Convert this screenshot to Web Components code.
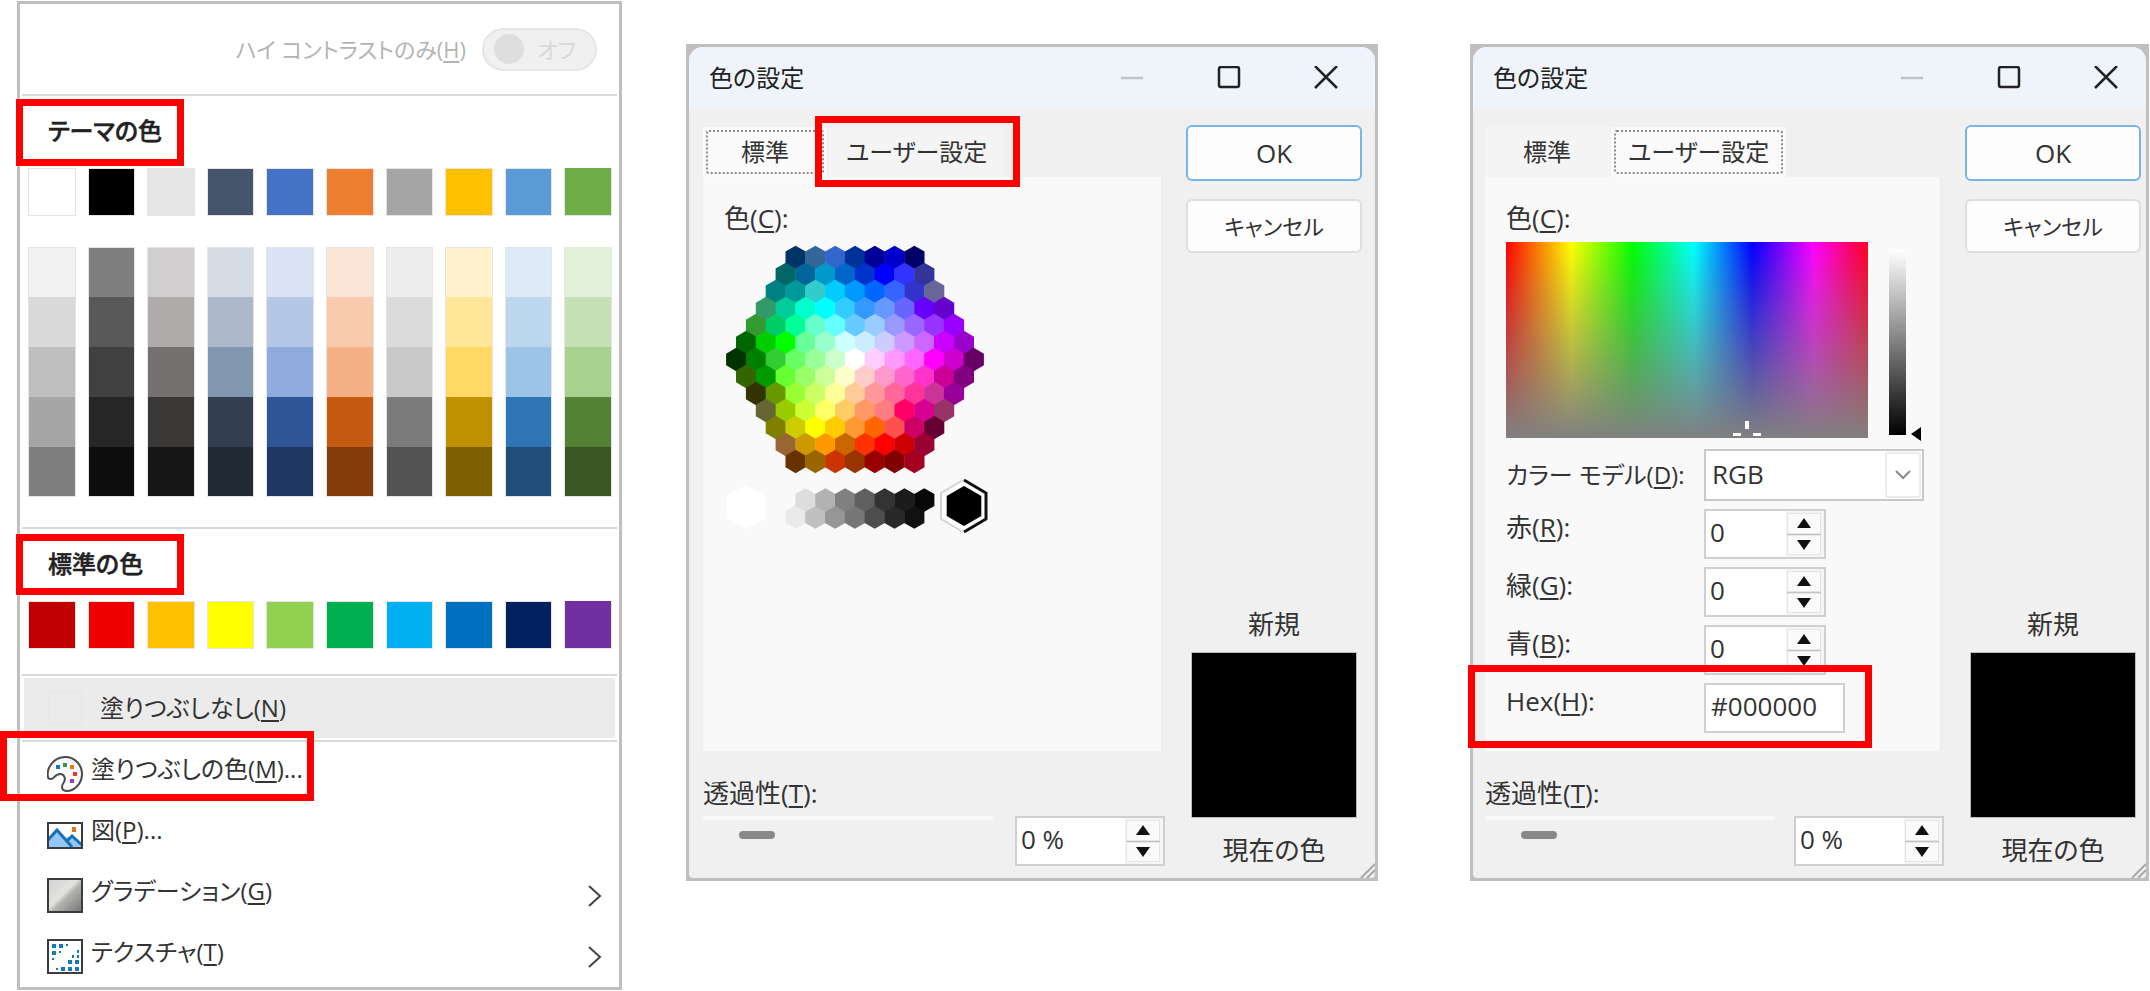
<!DOCTYPE html>
<html lang="ja">
<head>
<meta charset="utf-8">
<title>色の設定</title>
<style>
  body { margin: 0; background: #fff; color: #333; font: 26px/32px "Open Sans", "Noto Sans CJK JP", sans-serif; font-feature-settings: "palt"; }
  main { display: grid; grid-template-columns: minmax(0, 605fr) 64px minmax(0, 692fr) 92px minmax(0, 679fr); align-items: start; padding: 1px 1px 0 17px; }
  fill-menu { grid-column: 1; }
  color-dialog { margin-top: 43px; }
  color-dialog.standard { grid-column: 3; }
  color-dialog.custom { grid-column: 5; --body-left: 12px; --body-right: 5px; --caption-right: 28px; }
</style>
</head>
<body>
<main>
  <fill-menu></fill-menu>
  <color-dialog class="standard" selected="0" marked="1"><standard-colors></standard-colors></color-dialog>
  <color-dialog class="custom" selected="1"><custom-colors></custom-colors></color-dialog>
</main>
<script>
class Base extends HTMLElement {
  constructor() {
    super();
    this.attachShadow({ mode: 'open' }).innerHTML = '<style>*{box-sizing:border-box}button,input,select{font:inherit;font-feature-settings:inherit;color:inherit;margin:0}u{text-underline-offset:3px;text-decoration-thickness:2px}</style>' + this.markup();
  }
}

/* Red frame drawn over and around whatever is slotted in. */
class CalloutFrame extends Base {
  markup() {
    return `<style>
      :host { display: block; position: relative; }
      .frame { position: absolute; z-index: 2; top: var(--t, 0px); left: var(--l, 0px); right: var(--r, 0px); bottom: var(--b, 0px); width: var(--w, auto); border: 7px solid #f00; pointer-events: none; }
    </style><slot></slot><div class="frame"></div>`;
  }
}
customElements.define('callout-frame', CalloutFrame);

/* A row (or stacked block) of ten colour columns. */
class SwatchGrid extends HTMLElement {
  connectedCallback() {
    const rows = this.getAttribute('colors').trim().split('|').map(r => r.trim().split(/\s+/));
    const cells = rows.map(r => r.map(c => `<button aria-label="#${c}" style="background:#${c}"></button>`).join('')).join('');
    this.attachShadow({ mode: 'open' }).innerHTML = `<style>
      :host { display: grid; grid-template-columns: repeat(10, minmax(0, 1fr)); column-gap: 12px; padding: 0 7px 0 8px; }
      button { height: var(--cell, 48px); padding: 0; border: 0 solid #e4e4e4; border-width: 0 1px; }
      button:nth-child(-n+10) { border-top-width: 1px; }
      button:nth-last-child(-n+10) { border-bottom-width: 1px; }
    </style>${cells}`;
  }
}
customElements.define('swatch-grid', SwatchGrid);

class MenuItem extends Base {
  markup() {
    return `<style>
      :host { display: block; }
      button { display: flex; align-items: center; width: 100%; height: 61px; padding: 2px 17px 0 27px; border: 0; background: none; text-align: left; white-space: nowrap; }
      .icon { flex: none; width: 36px; height: 36px; margin-right: 8px; }
      .text { flex: 1; align-self: flex-start; line-height: 50px; }
      .arrow { display: none; width: 14px; height: 22px; }
      :host([submenu]) .arrow { display: block; }
    </style>
    <button><span class="icon"><slot name="icon"></slot></span><span class="text"><slot></slot></span>
    <svg class="arrow" viewBox="0 0 14 22" fill="none" stroke="#444" stroke-width="2"><path d="M1 1 12 11 1 21"/></svg></button>`;
  }
}
customElements.define('menu-item', MenuItem);

class FillMenu extends Base {
  markup() {
    return `<style>
      :host { display: block; border: 3px solid #bfbfbf; background: #fff; --cell: 48px; padding-bottom: 1px; font-size: 24px; }
      hr { height: 2px; margin: 0 2px; border: 0; background: #d9d9d9; }
      .contrast { display: flex; align-items: center; justify-content: flex-end; gap: 16px; height: 90px; padding-right: 22px; font-size: 22px; color: #b4b4b4; }
      .switch { display: flex; align-items: center; width: 115px; height: 43px; padding: 0 19px 0 10px; border: 2px solid #e6e6e6; border-radius: 22px; background: #f0f0f0; color: #d8d8d8; justify-content: space-between; }
      .switch input { appearance: none; width: 30px; height: 30px; border-radius: 50%; background: #dedede; }
      h2 { height: 72px; margin: 0; padding-left: 28px; font-size: 24px; font-weight: 500; line-height: 70px; color: #222; -webkit-text-stroke: 0.5px #222; }
      .base { margin-bottom: 31px; }
      .tints { margin-bottom: 30px; --cell: 50px; }
      .basic { margin-bottom: 25px; }
      .none { display: flex; align-items: center; gap: 18px; width: calc(100% - 8px); height: 60px; margin: 2px 4px; padding: 0 24px; border: 0; background: #ebebeb; white-space: nowrap; }
      .none i { width: 34px; height: 34px; border: 1px solid #e6e6e6; }
      svg { display: block; width: 36px; height: 36px; }
    </style>
    <div class="contrast"><label for="hc">ハイ コントラストのみ(<u>H</u>)</label><span class="switch"><input type="checkbox" id="hc" disabled><span>オフ</span></span></div>
    <hr>
    <callout-frame style="--t:3px;--b:2px;--l:-4px;--r:auto;--w:168px"><h2>テーマの色</h2></callout-frame>
    <swatch-grid class="base" colors="ffffff 000000 e7e6e6 44546a 4472c4 ed7d31 a5a5a5 ffc000 5b9bd5 70ad47"></swatch-grid>
    <swatch-grid class="tints" colors="f2f2f2 7f7f7f d0cece d6dce5 dae3f3 fbe5d6 ededed fff2cc deebf7 e2f0d9|
      d9d9d9 595959 afabab adb9ca b4c7e7 f8cbad dbdbdb ffe699 bdd7ee c5e0b4|
      bfbfbf 404040 767171 8497b0 8faadc f4b183 c9c9c9 ffd966 9dc3e6 a9d18e|
      a6a6a6 262626 3b3838 333f50 2f5597 c55a11 7b7b7b bf9000 2e75b6 548235|
      7f7f7f 0d0d0d 171717 222a35 203864 843c0c 525252 7f6000 1f4e79 385723"></swatch-grid>
    <hr>
    <callout-frame style="--t:5px;--b:6px;--l:-4px;--r:auto;--w:168px"><h2>標準の色</h2></callout-frame>
    <swatch-grid class="basic" colors="c00000 ee0000 ffc000 ffff00 92d050 00b050 00b0f0 0070c0 002060 7030a0"></swatch-grid>
    <hr>
    <button class="none"><i></i><span>塗りつぶしなし(<u>N</u>)</span></button>
    <hr>
    <callout-frame style="--t:-11px;--b:2px;--l:-20px;--r:auto;--w:314px"><menu-item><svg slot="icon" viewBox="0 0 36 36"><path d="M1 21C-1 12 7 1 18 1c11 0 17 9 17 17 0 10-8 17-15 17-6 0-6-5-3-9 2-4 0-8-4-8-5 0-7 6-9 5-2 0-3-1-3-2z" fill="#fafafa" stroke="#4a4a4a" stroke-width="2"/><path d="M9 9h4v4H9z" fill="#0b78c8"/><path d="M16 7h4v4h-4z" fill="#2f9a48"/><path d="M23 9h4v4h-4z" fill="#e87a1a"/><path d="M26 16h4v4h-4z" fill="#e8342c"/><path d="M23 23h4v4h-4z" fill="#9b3fc0"/></svg>塗りつぶしの色(<u>M</u>)...</menu-item></callout-frame>
    <menu-item><svg slot="icon" viewBox="0 0 36 36"><rect x="1" y="6" width="34" height="25" fill="#fff"/><path d="M1 24 10 13l8 8 7-2 10 9v3H1z" fill="#8fc8f8"/><path d="M1 23 10 13l15 17M20 24l5-5 10 9" fill="none" stroke="#1c6fb5" stroke-width="3"/><rect x="25" y="10" width="4" height="5" fill="#e8701a"/><rect x="1" y="6" width="34" height="25" fill="none" stroke="#3c3c3c" stroke-width="2"/></svg>図(<u>P</u>)...</menu-item>
    <menu-item submenu><svg slot="icon" viewBox="0 0 36 36"><defs><linearGradient id="g" x1="0" y1="0" x2="1" y2="1"><stop offset="0" stop-color="#d4d4d4"/><stop offset=".45" stop-color="#e2e2e0"/><stop offset=".55" stop-color="#b4b4b2"/><stop offset="1" stop-color="#747474"/></linearGradient></defs><rect x="1" y="1" width="34" height="33" fill="url(#g)" stroke="#3c3c3c" stroke-width="2"/></svg>グラデーション(<u>G</u>)</menu-item>
    <menu-item submenu><svg slot="icon" viewBox="0 0 36 36"><rect x="1" y="1" width="34" height="33" fill="#fff" stroke="#3c3c3c" stroke-width="2"/><path fill="#1478c0" d="M5 5h4v4H5zM12 5h4v4h-4zM19 5h2v2h-2zM5 12h4v4H5zM12 12h2v2h-2zM5 19h2v2H5zM30 11h2v3h-2zM25 16h2v3h-2zM30 16h2v3h-2zM21 21h4v4h-4zM28 21h4v4h-4zM9 29h2v2H9zM14 28h4v4h-4zM21 28h4v4h-4zM28 28h4v4h-4z"/></svg>テクスチャ(<u>T</u>)</menu-item>`;
  }
}
customElements.define('fill-menu', FillMenu);

/* Number field frame with up/down buttons; the text box is slotted in. */
class SpinBox extends Base {
  markup() {
    return `<style>
      :host { display: flex; width: var(--spin-width, 122px); height: 50px; padding: 2px 3px 2px 0; border: 2px solid #cfcfd1; background: linear-gradient(to left, #f5f5f5 38px, #fff 38px); }
      ::slotted(input) { box-sizing: border-box; flex: 1; min-width: 0; padding: 0 0 4px 4px; border: 0; background: none; font: inherit; color: inherit; outline: 0; }
      .keys { display: grid; grid-template-rows: 1fr 1fr; gap: 1px; width: 34px; background: #c4c4c6; }
      button { display: grid; place-items: center; padding: 0; border: 1px solid #e4e4e4; background: #fafafa; }
    </style>
    <slot></slot><span class="keys"><button aria-label="増やす"><svg width="14" height="10" viewBox="0 0 14 10"><path d="M7 0 14 10H0z" fill="#111"/></svg></button><button aria-label="減らす"><svg width="14" height="10" viewBox="0 0 14 10"><path d="M0 0h14L7 10z" fill="#111"/></svg></button></span>`;
  }
}
customElements.define('spin-box', SpinBox);

class ColorDialog extends HTMLElement {
  connectedCallback() {
    const tabs = ['標準', 'ユーザー設定'].map((name, i) => {
      const tab = `<button class="tab t${i}" role="tab" aria-selected="${this.getAttribute('selected') == i}"><span>${name}</span></button>`;
      return this.getAttribute('marked') == i ? `<callout-frame style="--t:-11px;--b:-10px;--l:-14px;--r:-16px">${tab}</callout-frame>` : tab;
    }).join('');
    this.attachShadow({ mode: 'open' }).innerHTML = `<style>
      * { box-sizing: border-box; }
      :host { display: block; box-sizing: border-box; border: 3px solid #bfbfbf; background: #bfbfbf; }
      button, input { font: inherit; font-feature-settings: inherit; color: inherit; margin: 0; }
      u { text-underline-offset: 3px; text-decoration-thickness: 2px; }
      .window { position: relative; border-radius: 14px 14px 4px 4px; background: #f0f0f0; }
      header { display: flex; align-items: center; height: 62px; padding: 0 var(--caption-right, 37px) 0 20px; border-radius: 14px 14px 0 0; background: #eef4fa; color: #222; }
      h1 { flex: 1; margin: 0; font-size: 24px; font-weight: 400; }
      .caption { display: flex; gap: 73px; }
      .caption button { width: 24px; height: 24px; padding: 0; border: 0; background: none; }
      .caption svg { display: block; fill: none; stroke: #222; stroke-width: 2.5; }
      .body { display: grid; grid-template-columns: minmax(0, 1fr) 176px; gap: 21px; padding: 16px var(--body-right, 13px) 12px var(--body-left, 14px); }
      .tabs { display: flex; gap: 2px; height: 50px; margin-top: 2px; font-size: 24px; }
      .tab { height: 50px; padding: 3px; border: 0; background: #f4f4f4; white-space: nowrap; }
      .tab span { display: grid; place-items: center; height: 100%; padding: 0 33px; border: 2px dotted transparent; border-radius: 3px; }
      .tab.t1 span { padding: 0 12px; }
      .tab[aria-selected=true] { background: #fafafa; }
      .tab[aria-selected=true] span { border-color: #8c8c8c; }
      .panel { min-height: 574px; margin-right: 3px; padding: 25px 16px 18px 21px; border-right: 1px solid #ececec; background: #f9f9f9; }
      .alpha-label { display: block; margin: 26px 0 7px; }
      .alpha { display: flex; justify-content: space-between; --spin-width: 150px; }
      .alpha input[type=range] { appearance: none; flex: 0 1 290px; min-width: 0; height: 38px; padding: 0 36px; background: linear-gradient(#f9f9f9 4px, transparent 4px); }
      input[type=range]::-webkit-slider-thumb { appearance: none; width: 36px; height: 8px; border-radius: 4px; background: #888; }
      .side { display: flex; flex-direction: column; text-align: center; }
      .push { height: 54px; padding: 0; border: 2px solid #dedede; border-radius: 6px; background: #fdfdfd; font-size: 22px; }
      .ok { height: 56px; margin-bottom: 18px; border-color: #78b5e6; font-size: 26px; }
      .new { margin-top: auto; }
      .swatch { height: 166px; margin: 12px 5px 16px; background: #000; border: 1px solid #bbb; }
      .grip { position: absolute; right: 0; bottom: 0; width: 16px; height: 16px; }
    </style>
    <div class="window">
      <header><h1>色の設定</h1><div class="caption">
        <button aria-label="最小化" disabled><svg width="24" height="24" viewBox="0 0 24 24"><path d="M1 12h22" style="stroke:#bfc4ca"/></svg></button>
        <button aria-label="最大化"><svg width="24" height="24" viewBox="0 0 24 24"><rect x="2" y="1" width="20" height="20" rx="2"/></svg></button>
        <button aria-label="閉じる"><svg width="24" height="24" viewBox="0 0 24 24"><path d="m1 0 22 22M23 0 1 22"/></svg></button></div></header>
      <div class="body">
        <div>
          <div class="tabs" role="tablist">${tabs}</div>
          <div class="panel"><slot></slot></div>
          <label class="alpha-label" for="alpha">透過性(<u>T</u>):</label>
          <div class="alpha"><input type="range" id="alpha" value="0"><spin-box><input type="text" aria-label="透過性" value="0 %"></spin-box></div>
        </div>
        <div class="side">
          <button class="push ok">OK</button><button class="push">キャンセル</button>
          <span class="new">新規</span><div class="swatch"></div><span>現在の色</span>
        </div>
      </div>
      <svg class="grip" viewBox="0 0 16 16" stroke="#a8a8a8" stroke-width="2"><path d="M2 16 16 2M8 16l8-8"/></svg>
    </div>`;
  }
}
customElements.define('color-dialog', ColorDialog);

class StandardColors extends Base {
  markup() {
    const hex = (x, y, r, fill, extra = '') => {
      const w = r * 0.866;
      const pts = [[0, -r], [w, -r / 2], [w, r / 2], [0, r], [-w, r / 2], [-w, -r / 2]].map(([a, b]) => `${(x + a).toFixed(1)},${(y + b).toFixed(1)}`).join(' ');
      return `<polygon points="${pts}" fill="${fill}" ${extra}/>`;
    };
    const rows = [
      '003366 336699 3366cc 003399 000099 0000cc 000066',
      '006666 006699 0099cc 0066cc 0033cc 0000ff 3333ff 333399',
      '008080 009999 33cccc 00ccff 0099ff 0066ff 3366ff 3333cc 666699',
      '339966 00cc99 00ffcc 00ffff 33ccff 3399ff 6699ff 6666ff 6600ff 6600cc',
      '339933 00cc66 00ff99 66ffcc 66ffff 66ccff 99ccff 9999ff 9966ff 9933ff 9900ff',
      '006600 00cc00 00ff00 66ff99 99ffcc ccffff ccecff ccccff cc99ff cc66ff cc00ff 9900cc',
      '003300 008000 33cc33 66ff66 99ff99 ccffcc ffffff ffccff ff99ff ff66ff ff00ff cc00cc 660066',
      '336600 009900 66ff33 99ff66 ccff99 ffffcc ffcccc ff99cc ff66cc ff33cc cc0099 800080',
      '333300 669900 99ff33 ccff66 ffff99 ffcc99 ff9999 ff6699 ff3399 cc3399 990099',
      '666633 99cc00 ccff33 ffff66 ffcc66 ff9966 ff7c80 ff0066 d60093 993366',
      '808000 cccc00 ffff00 ffcc00 ff9933 ff6600 ff5050 cc0066 660033',
      '996633 cc9900 ff9900 cc6600 ff3300 ff0000 cc0000 990033',
      '663300 996600 cc3300 993300 990000 800000 a50021'];
    let art = '';
    rows.forEach((r, j) => { const c = r.split(' '); c.forEach((f, i) => { art += hex(131 + (i - (c.length - 1) / 2) * 19.8, 125.5 + (j - 6) * 17, 11.7, '#' + f); }); });
    'eaeaea c0c0c0 969696 777777 4d4d4d 292929 111111'.split(' ').forEach((f, i) => { art += hex(71.5 + i * 19.8, 283, 11.7, '#' + f); });
    'dddddd b2b2b2 808080 5f5f5f 333333 1c1c1c 080808'.split(' ').forEach((f, i) => { art += hex(81.5 + i * 19.8, 266, 11.7, '#' + f); });
    art += hex(22, 273, 22, '#fff');
    art += hex(240, 272, 20, '#000') + hex(240, 272, 23, 'none', 'stroke="#fff" stroke-width="3"');
    art += '<path d="M240 246 262 259v26L240 298" fill="none" stroke="#111" stroke-width="3"/><path d="M239 246 217 259v26L239 298" fill="none" stroke="#d4d4d4" stroke-width="2"/>';
    return `<style>:host { display: block; } svg { display: block; max-width: 100%; } </style>
      <span id="l">色(<u>C</u>):</span><svg width="270" height="302" viewBox="0 0 270 302" role="img" aria-labelledby="l">${art}</svg>`;
  }
}
customElements.define('standard-colors', StandardColors);

class CustomColors extends Base {
  markup() {
    const field = (id, label, key) => `<label for="${id}">${label}(<u>${key}</u>):</label><spin-box><input type="text" id="${id}" value="0"></spin-box>`;
    return `<style>
      :host { display: block; }
      .pick { display: flex; align-items: stretch; height: 196px; margin: 8px 0 11px; }
      .spectrum { flex: 0 1 362px; background: linear-gradient(rgba(128,128,128,0), #808080), linear-gradient(to right, #f00, #ff0 18%, #0f0 35%, #0ff 52%, #00f 68%, #f0f 85%, #f02); }
      .spectrum svg { display: block; width: 28px; height: 18px; margin: 178px 0 0 calc(66.5% - 14px); }
      .light { width: 17px; margin: 8px 5px 3px 21px; background: linear-gradient(#fff, #000); }
      .mark { align-self: flex-end; width: 10px; height: 14px; margin-bottom: -3px; }
      .form { display: grid; grid-template-columns: 198px minmax(0, 1fr); row-gap: 8px; justify-items: start; }
      label { line-height: 36px; white-space: nowrap; }
      label.tall { line-height: 52px; font-size: 24px; }
      .select { display: grid; width: 100%; max-width: 220px; }
      .select > * { grid-area: 1 / 1; }
      select { appearance: none; width: 100%; height: 52px; padding: 0 0 2px 6px; border: 2px solid #c9c9c9; border-radius: 0; background: #fff; }
      .drop { justify-self: end; width: 36px; margin: 3px; border: 2px solid #ebebeb; border-radius: 3px; background: #fff; display: grid; place-items: center; pointer-events: none; }
      callout-frame { grid-column: 1 / -1; justify-self: stretch; }
      .hex { display: grid; grid-template-columns: 198px minmax(0, 1fr); }
      .hex input { width: 141px; height: 50px; padding: 0 0 4px 5px; border: 2px solid #cfcfd1; background: #fff; }
    </style>
    <span>色(<u>C</u>):</span>
    <div class="pick">
      <div class="spectrum"><svg viewBox="0 0 28 18" fill="#fff"><path d="M12 1h4v8h-4zM0 13h8v3H0zM20 13h8v3h-8z"/></svg></div>
      <div class="light"></div><svg class="mark" viewBox="0 0 10 14"><path d="M10 0v14L0 7z"/></svg>
    </div>
    <div class="form">
      <label class="tall" for="m">カラー モデル(<u>D</u>):</label>
      <span class="select"><select id="m"><option>RGB</option></select><span class="drop"><svg width="16" height="10" viewBox="0 0 16 10" fill="none" stroke="#8a8a8a" stroke-width="2"><path d="m1 1 7 7 7-7"/></svg></span></span>
      ${field('r', '赤', 'R')}${field('g', '緑', 'G')}${field('b', '青', 'B')}
      <callout-frame style="--t:-18px;--b:-15px;--l:-38px;--r:auto;--w:404px"><div class="hex"><label for="h">Hex(<u>H</u>):</label><input type="text" id="h" value="#000000"></div></callout-frame>
    </div>`;
  }
}
customElements.define('custom-colors', CustomColors);
</script>
</body>
</html>
